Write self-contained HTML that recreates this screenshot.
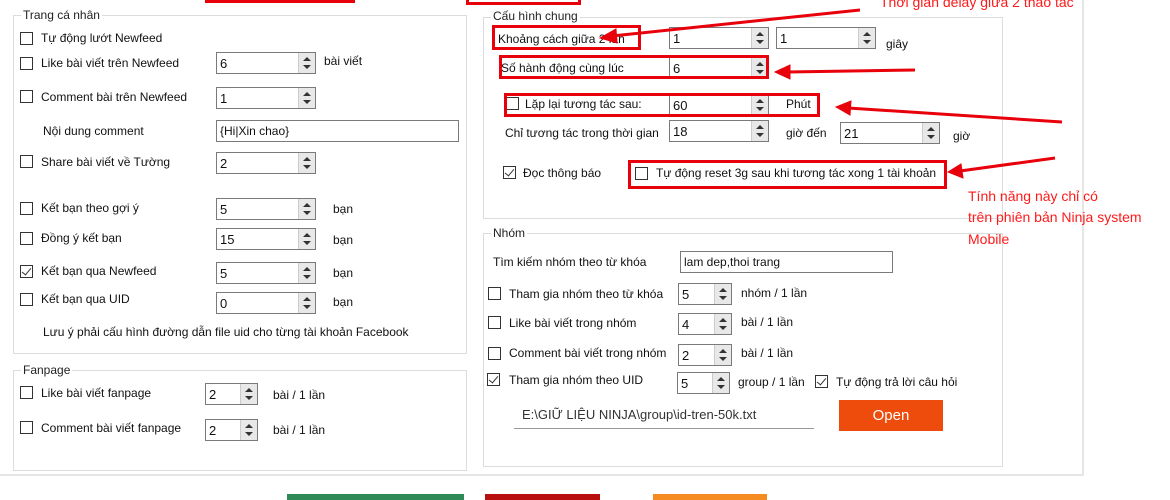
<!DOCTYPE html>
<html><head><meta charset="utf-8"><style>
*{box-sizing:border-box;margin:0;padding:0}
body{width:1170px;height:500px;background:#fff;position:relative;overflow:hidden;font-family:"Liberation Sans",sans-serif;font-size:12px;color:#111}
.a{position:absolute;white-space:nowrap}
.g{position:absolute;border:1px solid #dcdcdc}
.gt{position:absolute;background:#fff;padding:0 2px;font-size:12px;color:#222}
.cb{position:absolute;width:13px;height:13px;border:1px solid #333;background:#fff}
.cb.on::after{content:"";position:absolute;left:3px;top:0px;width:4px;height:8px;border:solid #333;border-width:0 1.5px 1.5px 0;transform:rotate(40deg)}
.sp{position:absolute;height:22px;border:1px solid #7a7a7a;background:#fff;padding:3px 0 0 3px;font-size:13px}
.sp::after{content:"";position:absolute;right:0;top:0;width:16px;height:20px;background:#e8e8e8;border-left:1px solid #ccc}
.sp i{position:absolute;right:4px;width:0;height:0;border-left:4px solid transparent;border-right:4px solid transparent;z-index:2}
.sp i.u{top:4px;border-bottom:4px solid #333}
.sp i.d{bottom:4px;border-top:4px solid #333}
.tb{position:absolute;height:22px;border:1px solid #7a7a7a;background:#fff;padding:3px 0 0 3px;font-size:12px}
.rb{position:absolute;border:3px solid #e8000b}
.rt{position:absolute;color:#ff1a1a;font-size:14px;white-space:nowrap}
</style></head><body>
<div style="position:absolute;left:0;top:0;width:1084px;height:476px;border-right:2px solid #e6e6e6;border-bottom:2px solid #e6e6e6"></div>
<div style="position:absolute;left:287px;top:494px;width:177px;height:6px;background:#2e8b57"></div>
<div style="position:absolute;left:485px;top:494px;width:115px;height:6px;background:#b80f0f"></div>
<div style="position:absolute;left:653px;top:494px;width:114px;height:6px;background:#f68b1f"></div>
<div style="position:absolute;left:205px;top:-3px;width:150px;height:6px;border:3px solid #e8000b"></div>
<div style="position:absolute;left:466px;top:-3px;width:115px;height:8px;border:3px solid #e8000b"></div>

<!-- Trang ca nhan -->
<div class="g" style="left:13px;top:15px;width:454px;height:339px"></div>
<div class="gt" style="left:21px;top:8px">Trang cá nhân</div>
<div class="cb" style="left:20px;top:32px"></div><div class="a" style="left:41px;top:31px">Tự động lướt Newfeed</div>
<div class="cb" style="left:20px;top:57px"></div><div class="a" style="left:41px;top:56px">Like bài viết trên Newfeed</div>
<div class="sp" style="left:216px;top:52px;width:100px">6<i class="u"></i><i class="d"></i></div><div class="a" style="left:324px;top:54px">bài viết</div>
<div class="cb" style="left:20px;top:90px"></div><div class="a" style="left:41px;top:90px">Comment bài trên Newfeed</div>
<div class="sp" style="left:216px;top:87px;width:100px">1<i class="u"></i><i class="d"></i></div>
<div class="a" style="left:43px;top:124px">Nội dung comment</div>
<div class="tb" style="left:216px;top:120px;width:243px">{Hi|Xin chao}</div>
<div class="cb" style="left:20px;top:155px"></div><div class="a" style="left:41px;top:155px">Share bài viết về Tường</div>
<div class="sp" style="left:216px;top:152px;width:100px">2<i class="u"></i><i class="d"></i></div>
<div class="cb" style="left:20px;top:202px"></div><div class="a" style="left:41px;top:201px">Kết bạn theo gợi ý</div>
<div class="sp" style="left:216px;top:198px;width:100px">5<i class="u"></i><i class="d"></i></div><div class="a" style="left:333px;top:202px">bạn</div>
<div class="cb" style="left:20px;top:232px"></div><div class="a" style="left:41px;top:231px">Đồng ý kết bạn</div>
<div class="sp" style="left:216px;top:228px;width:100px">15<i class="u"></i><i class="d"></i></div><div class="a" style="left:333px;top:233px">bạn</div>
<div class="cb on" style="left:20px;top:265px"></div><div class="a" style="left:41px;top:264px">Kết bạn qua Newfeed</div>
<div class="sp" style="left:216px;top:262px;width:100px">5<i class="u"></i><i class="d"></i></div><div class="a" style="left:333px;top:266px">bạn</div>
<div class="cb" style="left:20px;top:293px"></div><div class="a" style="left:41px;top:292px">Kết bạn qua UID</div>
<div class="sp" style="left:216px;top:292px;width:100px">0<i class="u"></i><i class="d"></i></div><div class="a" style="left:333px;top:295px">bạn</div>
<div class="a" style="left:43px;top:325px">Lưu ý phải cấu hình đường dẫn file uid cho từng tài khoản Facebook</div>

<!-- Fanpage -->
<div class="g" style="left:13px;top:370px;width:454px;height:101px"></div>
<div class="gt" style="left:21px;top:363px">Fanpage</div>
<div class="cb" style="left:20px;top:386px"></div><div class="a" style="left:41px;top:386px">Like bài viết fanpage</div>
<div class="sp" style="left:205px;top:383px;width:53px">2<i class="u"></i><i class="d"></i></div><div class="a" style="left:273px;top:388px">bài / 1 lần</div>
<div class="cb" style="left:20px;top:421px"></div><div class="a" style="left:41px;top:421px">Comment bài viết fanpage</div>
<div class="sp" style="left:205px;top:419px;width:53px">2<i class="u"></i><i class="d"></i></div><div class="a" style="left:273px;top:423px">bài / 1 lần</div>

<!-- Cau hinh chung -->
<div class="g" style="left:483px;top:17px;width:520px;height:202px"></div>
<div class="gt" style="left:491px;top:9px">Cấu hình chung</div>
<div class="a" style="left:498px;top:32px">Khoảng cách giữa 2 lần</div>
<div class="sp" style="left:669px;top:27px;width:100px">1<i class="u"></i><i class="d"></i></div>
<div class="sp" style="left:776px;top:27px;width:100px">1<i class="u"></i><i class="d"></i></div>
<div class="a" style="left:886px;top:37px">giây</div>
<div class="rb" style="left:492px;top:25px;width:149px;height:25px"></div>
<div class="a" style="left:501px;top:61px">Số hành động cùng lúc</div>
<div class="sp" style="left:669px;top:57px;width:100px">6<i class="u"></i><i class="d"></i></div>
<div class="rb" style="left:499px;top:55px;width:270px;height:24px"></div>
<div class="cb" style="left:506px;top:97px"></div><div class="a" style="left:525px;top:97px">Lặp lại tương tác sau:</div>
<div class="sp" style="left:669px;top:94px;width:100px">60<i class="u"></i><i class="d"></i></div>
<div class="a" style="left:786px;top:97px">Phút</div>
<div class="rb" style="left:504px;top:93px;width:316px;height:24px"></div>
<div class="a" style="left:505px;top:126px">Chỉ tương tác trong thời gian</div>
<div class="sp" style="left:669px;top:120px;width:100px">18<i class="u"></i><i class="d"></i></div>
<div class="a" style="left:786px;top:126px">giờ đến</div>
<div class="sp" style="left:840px;top:122px;width:100px">21<i class="u"></i><i class="d"></i></div>
<div class="a" style="left:953px;top:129px">giờ</div>
<div class="cb on" style="left:503px;top:166px"></div><div class="a" style="left:523px;top:166px">Đọc thông báo</div>
<div class="rb" style="left:628px;top:160px;width:319px;height:29px"></div>
<div class="cb" style="left:635px;top:167px"></div><div class="a" style="left:656px;top:166px">Tự động reset 3g sau khi tương tác xong 1 tài khoản</div>

<!-- Nhom -->
<div class="g" style="left:483px;top:233px;width:520px;height:234px"></div>
<div class="gt" style="left:491px;top:226px">Nhóm</div>
<div class="a" style="left:493px;top:255px">Tìm kiếm nhóm theo từ khóa</div>
<div class="tb" style="left:680px;top:251px;width:213px">lam dep,thoi trang</div>
<div class="cb" style="left:488px;top:287px"></div><div class="a" style="left:509px;top:287px">Tham gia nhóm theo từ khóa</div>
<div class="sp" style="left:678px;top:283px;width:54px">5<i class="u"></i><i class="d"></i></div><div class="a" style="left:741px;top:286px">nhóm / 1 lần</div>
<div class="cb" style="left:488px;top:316px"></div><div class="a" style="left:509px;top:316px">Like bài viết trong nhóm</div>
<div class="sp" style="left:678px;top:313px;width:54px">4<i class="u"></i><i class="d"></i></div><div class="a" style="left:741px;top:315px">bài / 1 lần</div>
<div class="cb" style="left:488px;top:347px"></div><div class="a" style="left:509px;top:346px">Comment bài viết trong nhóm</div>
<div class="sp" style="left:678px;top:344px;width:54px">2<i class="u"></i><i class="d"></i></div><div class="a" style="left:741px;top:346px">bài / 1 lần</div>
<div class="cb on" style="left:487px;top:373px"></div><div class="a" style="left:509px;top:373px">Tham gia nhóm theo UID</div>
<div class="sp" style="left:677px;top:372px;width:53px">5<i class="u"></i><i class="d"></i></div><div class="a" style="left:738px;top:375px">group / 1 lần</div>
<div class="cb on" style="left:815px;top:375px"></div><div class="a" style="left:836px;top:375px">Tự động trả lời câu hỏi</div>
<div class="a" style="left:522px;top:407px;font-size:13px;color:#333">E:\GIỮ LIỆU NINJA\group\id-tren-50k.txt</div>
<div style="position:absolute;left:514px;top:428px;width:300px;height:1px;background:#999"></div>
<div style="position:absolute;left:839px;top:400px;width:104px;height:31px;background:#ee4c0c;color:#fff;font-size:15px;text-align:center;line-height:31px">Open</div>

<!-- annotations -->
<div class="rt" style="left:880px;top:-6px">Thời gian delay giữa 2 thao tác</div>
<div class="rt" style="left:968px;top:188px">Tính năng này chỉ có</div>
<div class="rt" style="left:968px;top:209px">trên phiên bản Ninja system</div>
<div class="rt" style="left:968px;top:231px">Mobile</div>
<svg style="position:absolute;left:0;top:0" width="1170" height="500">
<g stroke="#e8000b" stroke-width="3" fill="#e8000b">
<line x1="860" y1="10" x2="612" y2="36"/><polygon points="600,38 616,29 617,43" stroke-width="1"/>
<line x1="915" y1="70" x2="788" y2="72"/><polygon points="775,72 790,65 790,79" stroke-width="1"/>
<line x1="1062" y1="122" x2="848" y2="108"/><polygon points="836,107 851,101 850,115" stroke-width="1"/>
<line x1="1055" y1="158" x2="960" y2="171"/><polygon points="948,172 961,164 963,178" stroke-width="1"/>
</g></svg>
</body></html>
